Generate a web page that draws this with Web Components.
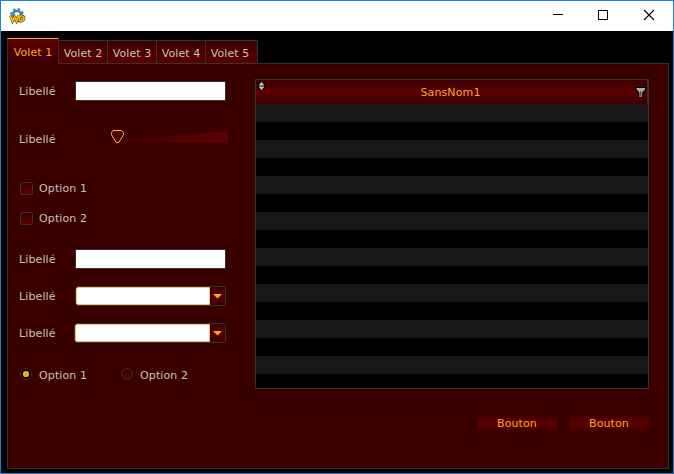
<!DOCTYPE html>
<html lang="fr"><head><meta charset="utf-8"><title>Fenêtre</title>
<style>
html,body{margin:0;height:100%;overflow:hidden;background:#000}
body{font:11px "DejaVu Sans",sans-serif;color:#c8c0b8}
</style></head><body>
<app-window></app-window>
<script>
const define=(name,html,setup)=>customElements.define(name,class extends HTMLElement{
  connectedCallback(){
    if(this.shadowRoot)return;
    const t=document.createElement('template');t.innerHTML=html;
    this.attachShadow({mode:'open'}).append(t.content.cloneNode(true));
    if(setup)setup(this,this.shadowRoot);
  }
});

define('title-bar',`<style>
:host{display:flex;height:30px;background:#fff;align-items:center;justify-content:space-between;box-sizing:border-box;padding-left:8px}
.controls{display:flex}.controls svg{display:block;width:46px;height:30px}
.logo{width:17px;height:16px;display:block}
</style>
<svg class="logo" viewBox="0 0 17 16"><g fill="none" stroke="#4488be"><circle cx="8" cy="7" r="4.2" stroke-width="2.8"/><circle cx="8" cy="7" r="6" stroke-width="2" stroke-dasharray="2.5 2.2"/></g>
<path d="M1.5 7.5L3.5 13L5.5 9L7.5 13L9.5 7.5M10.5 8V13H12Q15 12.5 15 10.3Q15 8 12 8H10" fill="none" stroke="#5a4512" stroke-width="2.8"/>
<path d="M1.5 7.5L3.5 13L5.5 9L7.5 13L9.5 7.5M10.5 8V13H12Q15 12.5 15 10.3Q15 8 12 8H10" fill="none" stroke="#f4bd18" stroke-width="1.7"/></svg>
<div class="controls">
<svg viewBox="0 0 46 30"><path d="M18 13.5h10" stroke="#000"/></svg>
<svg viewBox="0 0 46 30"><rect x="17.5" y="9.5" width="9" height="9" fill="none" stroke="#000"/></svg>
<svg viewBox="0 0 46 30"><path d="M17 9l10 10M27 9l-10 10" stroke="#000" stroke-width="1.1" fill="none"/></svg>
</div>`);

define('tab-item',`<style>
:host{display:block;box-sizing:border-box;width:49px;height:23px;border:solid #333;border-width:1px 1px 0 0;background:linear-gradient(#3a0000,#5c0000);text-align:center;line-height:25px;white-space:nowrap;letter-spacing:.1px}
:host([last]){width:52px;padding-right:3px}
:host([active]){width:52px;height:26px;border-left:1px solid #333;border-top-color:#fa3;background:linear-gradient(#5c0000,#3a0000 95%);color:#ffa133;margin-bottom:-1px;line-height:27px;z-index:1;position:relative}
</style><slot></slot>`);

define('tab-panel',`<style>
:host{display:flex;flex-direction:column;flex:1;padding:7px 4px 4px 6px}
nav{display:flex;align-items:flex-end;height:25px}
main{flex:1;border:1px solid #333;background:#3a0000;display:flex;box-sizing:border-box}
</style><nav><slot name="tab"></slot></nav><main><slot></slot></main>`);

define('form-row',`<style>
:host{display:flex;height:20px;align-items:center}
span{width:56px;flex:none;letter-spacing:.12px}
</style><span></span><slot></slot>`,(el,r)=>r.querySelector('span').textContent=el.getAttribute('label'));

define('text-input',`<style>
:host{display:block;width:151px;height:20px;box-sizing:border-box;border:1px solid #333;border-radius:1px;background:#fff}
</style>`);

define('combo-box',`<style>
:host{display:flex;width:151px;height:20px;box-sizing:border-box;border:1px solid #333;border-radius:3px;background:linear-gradient(#3a0000,#5c0000,#3a0000);overflow:hidden}
:host([wide]){width:152px;margin-left:-1px}
.field{flex:1;background:#fff;border:1px solid #e8c878;border-radius:2px 0 0 2px}
svg{width:15px;height:18px;display:block}
</style><div class="field"></div><svg viewBox="0 0 15 18"><path d="M3 7h9l-4.5 4.6z" fill="#ffa133"/></svg>`);

define('range-slider',`<style>
:host{display:block;width:154px;height:20px}svg{display:block}
</style><svg width="154" height="20" viewBox="0 0 154 20">
<defs><linearGradient id="g"><stop stop-color="#3a0000"/><stop offset="1" stop-color="#5c0000"/></linearGradient>
<linearGradient id="t" x2="0" y2="1"><stop stop-color="#650000"/><stop offset=".6" stop-color="#3a0000"/></linearGradient></defs>
<path d="M3 14L153 2V14Z" fill="url(#g)"/>
<path d="M38 1.5h8.5l2 2v2.2L43.8 13.5h-2.6L36.5 5.7V3.5z" fill="url(#t)" stroke="#fab52a"/></svg>`);

define('check-option',`<style>
:host{display:flex;align-items:center;gap:6px;height:14px;white-space:nowrap;letter-spacing:.12px}
i{display:block;box-sizing:border-box;width:13px;height:13px;border:1px solid #333;border-radius:2px;background:linear-gradient(#3a0000,#5c0000)}
</style><i></i><slot></slot>`);

define('radio-option',`<style>
:host{display:flex;align-items:center;gap:7px;height:14px;white-space:nowrap;width:101px;letter-spacing:.12px}
svg{display:block;width:12px;height:12px;margin-top:-2px}.dot{display:none}
:host([checked]) .dot{display:block}:host([checked]) .ring{fill:#180000}
</style><svg viewBox="0 0 12 12"><defs><linearGradient id="r" x2="0" y2="1"><stop stop-color="#3a0000"/><stop offset="1" stop-color="#5c0000"/></linearGradient></defs>
<circle class="ring" cx="6" cy="6" r="5.5" fill="url(#r)" stroke="#333"/><circle class="dot" cx="6" cy="6" r="3.1" fill="#f5ae18"/></svg><slot></slot>`);

define('push-button',`<style>
:host{display:block;width:80px;height:20px;line-height:21px;text-align:center;color:#ffa133;letter-spacing:.1px;background:linear-gradient(#3a0000,#5c0000 50%,#3a0000)}
</style><slot></slot>`);

define('data-table',`<style>
:host{display:flex;flex-direction:column;box-sizing:border-box;width:394px;height:310px;border:1px solid #333;overflow:hidden}
header{height:24px;display:flex;justify-content:space-between;background:linear-gradient(#3a0000,#5c0000 50%,#3a0000);color:#ffa133;line-height:25px;border-right:1px solid #333}
.title{letter-spacing:.12px;padding-right:2px}
.rows{flex:1;background:repeating-linear-gradient(#171717 0 18px,#000 18px 36px)}
svg{display:block}
</style><header><svg width="12" height="24" viewBox="0 0 12 24"><circle cx="5.5" cy="6" r="3.9" fill="#000"/><path d="M2.5 5.5L5.5 2L8.5 5.5zM2.5 6.5L5.5 10L8.5 6.5z" fill="#ccc"/></svg>
<span class="title"><slot></slot></span><svg width="12" height="24" viewBox="0 0 12 24"><path d="M.8 7.5h10v2L7.8 12.6v4.9h-4v-4.9L.8 9.5z" fill="#aaa" stroke="#000" stroke-width="1.1"/><path d="M5.8 11v5.5" stroke="#333"/></svg></header><div class="rows"></div>`);

define('app-window',`<style>
:host{display:flex;flex-direction:column;box-sizing:border-box;width:674px;height:474px;border:1px solid #1a82d8;background:#000}
.left{width:247px;padding:17px 0 0 11px;box-sizing:border-box}
.right{padding-top:15px;display:flex;flex-direction:column;align-items:flex-end;height:100%;box-sizing:border-box}
.buttons{display:flex;gap:12px;margin-top:24px}
.radios{display:flex;margin-top:25px}
</style>
<title-bar></title-bar>
<tab-panel>
<tab-item slot="tab" active>Volet 1</tab-item><tab-item slot="tab">Volet 2</tab-item><tab-item slot="tab">Volet 3</tab-item><tab-item slot="tab">Volet 4</tab-item><tab-item slot="tab" last>Volet 5</tab-item>
<div class="left">
<form-row label="Libellé"><text-input></text-input></form-row>
<form-row label="Libellé" style="margin-top:28px"><range-slider></range-slider></form-row>
<check-option style="margin:32px 0 16px 1px">Option 1</check-option>
<check-option style="margin-left:1px">Option 2</check-option>
<form-row label="Libellé" style="margin-top:24px"><text-input></text-input></form-row>
<form-row label="Libellé" style="margin-top:17px"><combo-box></combo-box></form-row>
<form-row label="Libellé" style="margin-top:17px"><combo-box wide></combo-box></form-row>
<div class="radios" style="margin-left:1px"><radio-option checked>Option 1</radio-option><radio-option>Option 2</radio-option></div>
</div>
<div class="right"><data-table>SansNom1</data-table><div class="buttons"><push-button>Bouton</push-button><push-button>Bouton</push-button></div></div>
</tab-panel>
`);
</script></body></html>
